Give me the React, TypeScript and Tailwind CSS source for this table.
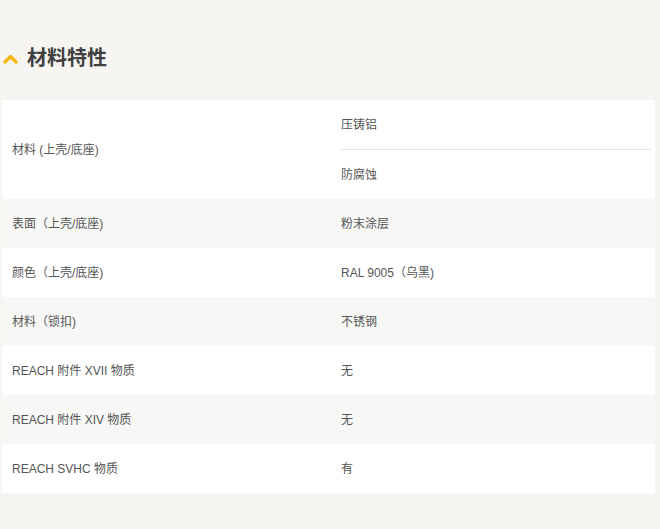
const rows: { label: string; values: string[] }[] = [
  { label: "材料 (上壳/底座)", values: ["压铸铝", "防腐蚀"] },
  { label: "表面（上壳/底座)", values: ["粉末涂层"] },
  { label: "颜色（上壳/底座)", values: ["RAL 9005（乌黑)"] },
  { label: "材料（锁扣)", values: ["不锈钢"] },
  { label: "REACH 附件 XVII 物质", values: ["无"] },
  { label: "REACH 附件 XIV 物质", values: ["无"] },
  { label: "REACH SVHC 物质", values: ["有"] },
];

export default function App() {
  return (
    <main
      className="min-h-[529px] bg-[#f6f5f2] text-[#555] pb-9"
      style={{ fontFamily: '"Liberation Sans", "Noto Sans CJK SC", sans-serif' }}
    >
      <div className="flex items-center gap-[9px] pl-[3px] pt-[45px] pb-[29px]">
        <svg width="15" height="10" viewBox="0 0 15 10" className="mt-[1px]">
          <path d="M2 8 L7.5 2.5 L13 8" fill="none" stroke="#f6b80f" strokeWidth="3.2" strokeLinecap="round" strokeLinejoin="round" />
        </svg>
        <h2 className="text-[20px] leading-[26px] font-bold text-[#404040]">材料特性</h2>
      </div>

      <div className="ml-[2px] w-[653px]">
        {rows.map((row, i) => (
          <div
            key={row.label}
            className={`grid grid-cols-[329px_1fr] text-[12px] ${i % 2 === 0 ? "bg-white" : "bg-[#f7f7f5]"}`}
          >
            <div className="flex items-center pl-[10px]">{row.label}</div>
            <div className="pl-[10px] pr-[4px]">
              {row.values.map((v, j) => (
                <div
                  key={v}
                  className={
                    j > 0
                      ? "flex h-[50px] items-center border-t border-[#e4e4e4]"
                      : "flex h-[49px] items-center"
                  }
                >
                  {v}
                </div>
              ))}
            </div>
          </div>
        ))}
      </div>
    </main>
  );
}
